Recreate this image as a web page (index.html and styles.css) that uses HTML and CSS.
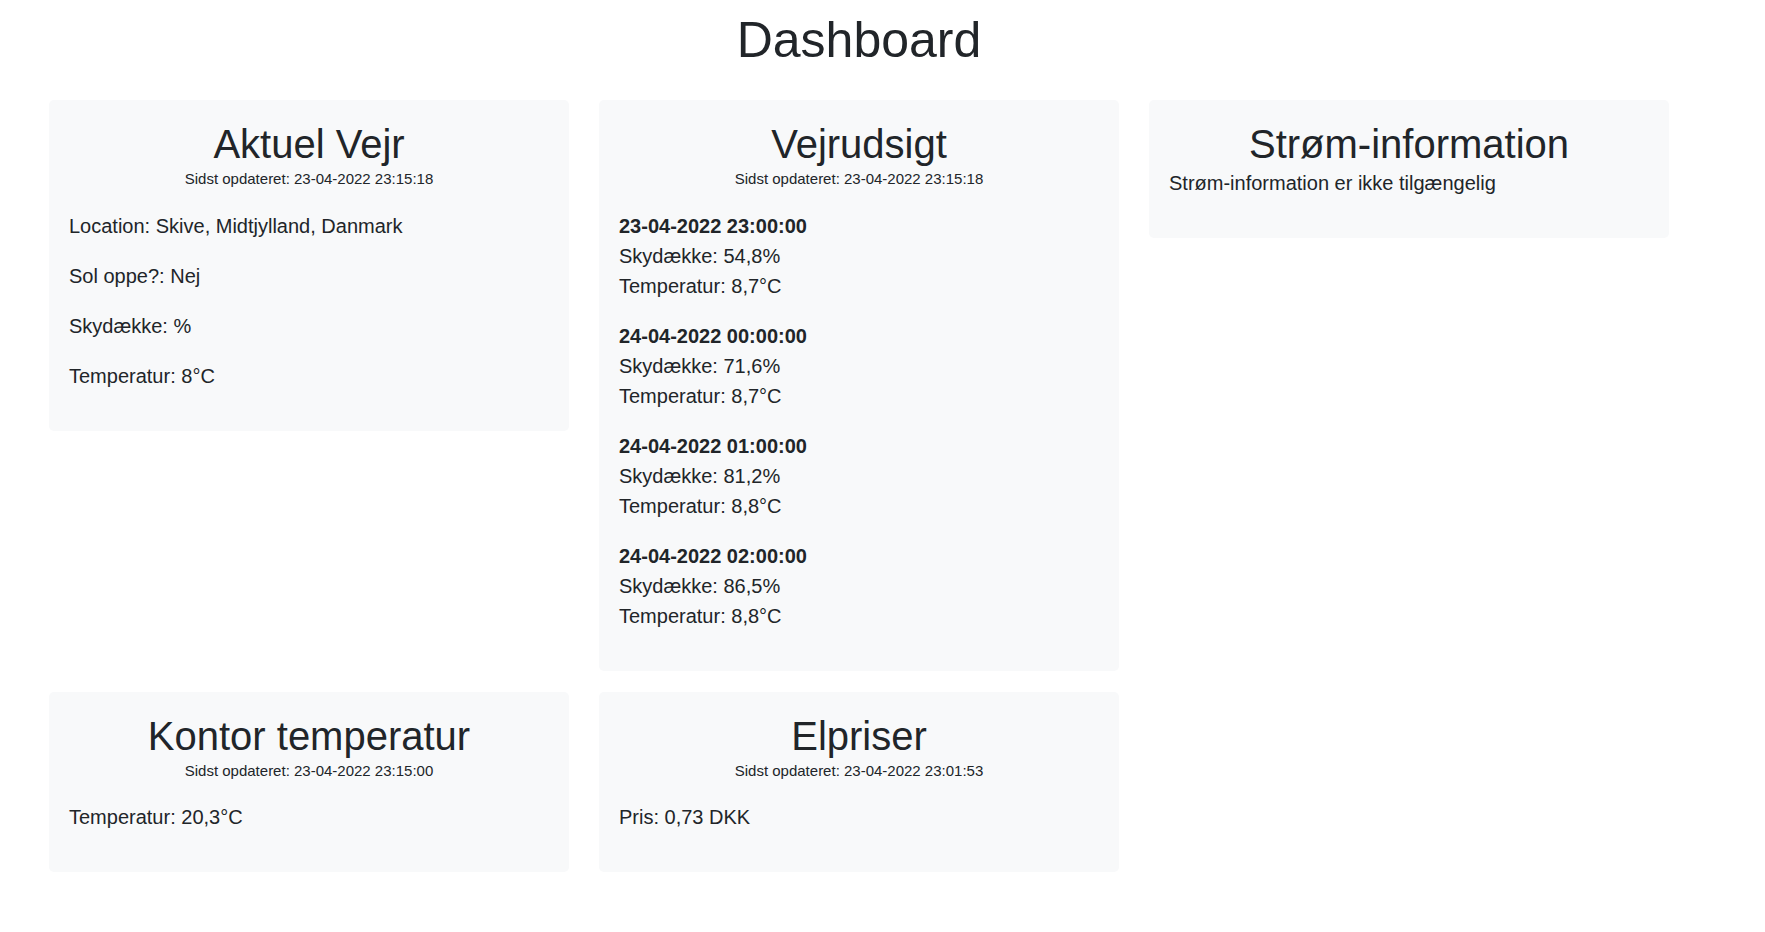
FILE: index.html
```html
<!DOCTYPE html>
<html lang="da">
<head>
<meta charset="utf-8">
<title>Dashboard</title>
<link rel="stylesheet" href="styles.css">
</head>
<body>
<main class="page">
  <h1 class="page-title">Dashboard</h1>
  <div class="grid">
    <section class="card">
      <h2 class="card-title">Aktuel Vejr</h2>
      <div class="updated">Sidst opdateret: 23-04-2022 23:15:18</div>
      <p class="line">Location: Skive, Midtjylland, Danmark</p>
      <p class="line">Sol oppe?: Nej</p>
      <p class="line">Skydække: %</p>
      <p class="line">Temperatur: 8°C</p>
    </section>
    <section class="card">
      <h2 class="card-title">Vejrudsigt</h2>
      <div class="updated">Sidst opdateret: 23-04-2022 23:15:18</div>
      <div class="forecast">
        <div class="time">23-04-2022 23:00:00</div>
        <div>Skydække: 54,8%</div>
        <div>Temperatur: 8,7°C</div>
      </div>
      <div class="forecast">
        <div class="time">24-04-2022 00:00:00</div>
        <div>Skydække: 71,6%</div>
        <div>Temperatur: 8,7°C</div>
      </div>
      <div class="forecast">
        <div class="time">24-04-2022 01:00:00</div>
        <div>Skydække: 81,2%</div>
        <div>Temperatur: 8,8°C</div>
      </div>
      <div class="forecast">
        <div class="time">24-04-2022 02:00:00</div>
        <div>Skydække: 86,5%</div>
        <div>Temperatur: 8,8°C</div>
      </div>
    </section>
    <section class="card">
      <h2 class="card-title">Strøm-information</h2>
      <p class="line">Strøm-information er ikke tilgængelig</p>
    </section>
    <section class="card">
      <h2 class="card-title">Kontor temperatur</h2>
      <div class="updated">Sidst opdateret: 23-04-2022 23:15:00</div>
      <p class="line">Temperatur: 20,3°C</p>
    </section>
    <section class="card">
      <h2 class="card-title">Elpriser</h2>
      <div class="updated">Sidst opdateret: 23-04-2022 23:01:53</div>
      <p class="line">Pris: 0,73 DKK</p>
    </section>
  </div>
</main>
</body>
</html>
```

FILE: styles.css
```css
html, body {
  margin: 0;
  padding: 0;
  background: #ffffff;
}

body {
  font-family: "Liberation Sans", Arial, sans-serif;
  font-size: 20px;
  line-height: 1.5;
  color: #212529;
}

.page {
  width: 1620px;
  margin-left: 49px;
  padding-top: 10px;
}

.page-title {
  margin: 0 0 30px;
  font-size: 50px;
  font-weight: 400;
  line-height: 1.2;
  text-align: center;
}

.grid {
  display: grid;
  grid-template-columns: repeat(3, 520px);
  column-gap: 30px;
  row-gap: 21px;
  align-items: start;
}

.card {
  background: #f8f9fa;
  border-radius: 5px;
  padding: 20px;
}

.card-title {
  margin: 0;
  font-size: 40px;
  font-weight: 400;
  line-height: 1.2;
  text-align: center;
}

.updated {
  font-size: 15px;
  line-height: 1.5;
  text-align: center;
  margin-bottom: 20px;
}

.line {
  margin: 0 0 20px;
}

.forecast {
  margin-bottom: 20px;
}

.time {
  font-weight: 700;
}
```
